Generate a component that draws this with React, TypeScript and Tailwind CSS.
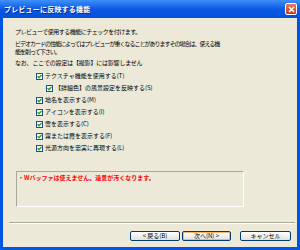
import React from "react";

const options = [
  { label: "テクスチャ機能を使用する(T)", indent: false },
  { label: "【詳細色】の風景設定を反映する(S)", indent: true },
  { label: "地名を表示する(M)", indent: false },
  { label: "アイコンを表示する(I)", indent: false },
  { label: "雲を表示する(C)", indent: false },
  { label: "霧または霞を表示する(F)", indent: false },
  { label: "光源方向を忠実に再現する(L)", indent: false },
];

const CheckBox = () => (
  <span className="w-[7px] h-[7px] border border-[#1c5180] bg-white flex items-center justify-center shrink-0">
    <svg width="5" height="5" viewBox="0 0 5 5">
      <path d="M0.5 2.3 L2 3.8 L4.5 1" stroke="#21a121" strokeWidth="1.3" fill="none" />
    </svg>
  </span>
);

const Button = ({ label, width, active }: { label: string; width: string; active?: boolean }) => (
  <button
    className={`${width} h-[10px] rounded-[2px] border border-[#003c74] bg-gradient-to-b from-white to-[#e3e2da] text-[6px] leading-none text-black flex items-center justify-center ${
      active ? "shadow-[inset_0_0_0_1px_#f4b872]" : ""
    }`}
  >
    {label}
  </button>
);

const App = () => {
  return (
    <div
      className="w-[300px] h-[250px] bg-[#0054e3] flex flex-col overflow-hidden"
      style={{ fontFamily: '"Noto Sans CJK JP", "Liberation Sans", sans-serif' }}
    >
      <div className="h-[18px] shrink-0 bg-gradient-to-b from-[#3d8ff7] via-[#0a5ae8] to-[#0550d8] flex items-center justify-between pl-[4px] pr-[3px]">
        <span className="text-white font-bold text-[7px] tracking-[0.2px] [text-shadow:1px_1px_0_#0a2a8a]">
          プレビューに反映する機能
        </span>
        <span className="w-[12px] h-[12px] rounded-[2px] border border-white bg-gradient-to-b from-[#e87a5e] to-[#c4391c] flex items-center justify-center">
          <svg width="7" height="7" viewBox="0 0 7 7">
            <path d="M1 1 L6 6 M6 1 L1 6" stroke="white" strokeWidth="1.5" />
          </svg>
        </span>
      </div>

      <div className="flex-1 mx-[3px] mb-[3px] bg-[#ece9d8] flex flex-col text-black">
        <div className="pl-[12px] pt-[10px] text-[6px] leading-[7px]">
          <p className="tracking-[-0.5px]">プレビューで使用する機能にチェックを付けます。</p>
          <p className="mt-[5px] leading-[8px] tracking-[-1px]">
            ビデオカードの性能によってはプレビューが重くなることがありますその場合は、使える機
            <br />
            能を削って下さい。
          </p>
          <p className="mt-[3px] tracking-[-0.2px]">なお、ここでの設定は【撮影】には影響しません</p>
        </div>

        <div className="mt-[4px] flex flex-col pl-[33px]">
          {options.map((o) => (
            <div
              key={o.label}
              className={`h-[12px] flex items-center gap-[2px] ${o.indent ? "pl-[10px]" : ""}`}
            >
              <CheckBox />
              <span className="text-[6px] leading-none">{o.label}</span>
            </div>
          ))}
        </div>

        <div className="mt-[17px] ml-[13px] w-[228px] h-[36px] border border-t-[#aca899] border-l-[#aca899] border-b-white border-r-white px-[1px] pt-[2px]">
          <p className="text-[6px] leading-[7px] font-bold text-[#ff0000]">
            ・Wバッファは使えません。遠景が汚くなります。
          </p>
        </div>

        <div className="mt-[15px] ml-[6px] mr-[2px] h-[2px] border-t border-t-[#aca899] border-b border-b-white" />

        <div className="mt-[7px] flex justify-end pr-[6px]">
          <Button label="< 戻る(B)" width="w-[50px]" />
          <div className="ml-[2px]">
            <Button label="次へ(N) >" width="w-[49px]" active />
          </div>
          <div className="ml-[9px]">
            <Button label="キャンセル" width="w-[51px]" />
          </div>
        </div>
      </div>
    </div>
  );
};

export default App;
